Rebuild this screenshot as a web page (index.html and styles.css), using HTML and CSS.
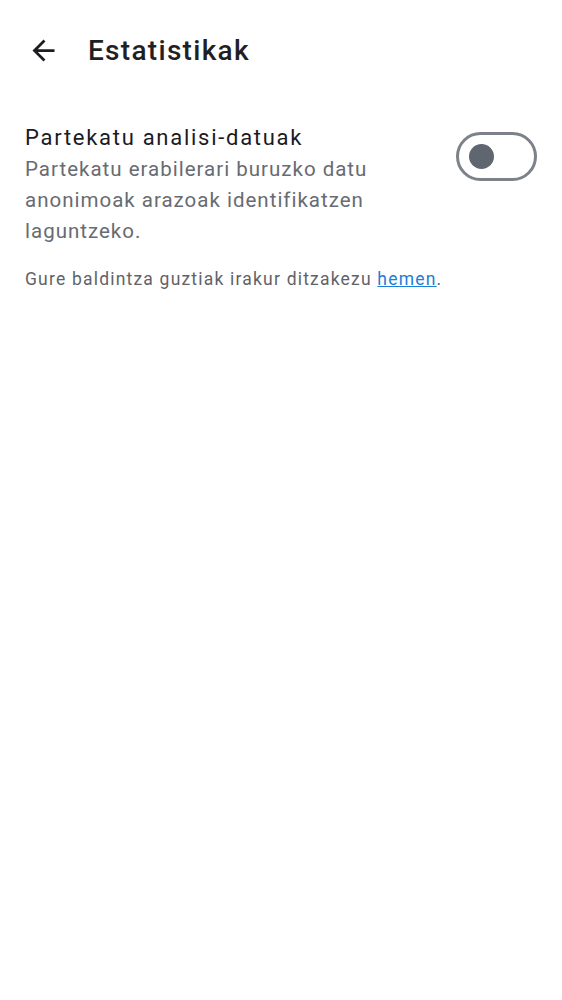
FILE: index.html
```html
<!DOCTYPE html>
<html lang="eu">
<head>
<meta charset="utf-8">
<title>Estatistikak</title>
<link rel="stylesheet" href="styles.css">
</head>
<body>
<header class="topbar">
  <button class="back" aria-label="Atzera">
    <svg width="33" height="33" viewBox="0 0 24 24"><path d="M20 11H7.83l5.59-5.59L12 4l-8 8 8 8 1.41-1.41L7.83 13H20v-2z" fill="#1c1b1f"/></svg>
  </button>
  <h1 class="title">Estatistikak</h1>
</header>
<main class="content">
  <section class="setting">
    <div class="setting-text">
      <div class="setting-title">Partekatu analisi-datuak</div>
      <div class="setting-desc">Partekatu erabilerari buruzko datu anonimoak arazoak identifikatzen laguntzeko.</div>
    </div>
    <div class="switch" role="switch" aria-checked="false"><span class="thumb"></span></div>
  </section>
  <p class="note">Gure baldintza guztiak irakur ditzakezu <a href="#" class="link">hemen</a>.</p>
</main>
</body>
</html>
```
FILE: styles.css
```css
html, body {
  margin: 0;
  padding: 0;
  background: #ffffff;
  font-family: Roboto, "Noto Sans", sans-serif;
}
.topbar {
  height: 100px;
  display: flex;
  align-items: center;
  padding-left: 19px;
  box-sizing: border-box;
}
.back {
  width: 48px;
  height: 48px;
  border: 0;
  background: none;
  padding: 0;
  display: flex;
  align-items: center;
  justify-content: center;
}
.title {
  margin: 0 0 0 21px;
  font-size: 28px;
  font-weight: 500;
  letter-spacing: 1.3px;
  color: #1f1f24;
}
.content {
  padding: 21px 25px 0 25px;
}
.setting {
  display: flex;
  align-items: flex-start;
  justify-content: space-between;
}
.setting-text {
  width: 400px;
}
.setting-title {
  font-size: 22px;
  line-height: 33px;
  letter-spacing: 1.72px;
  color: #1c1b1f;
}
.setting-desc {
  font-size: 20.5px;
  line-height: 31px;
  color: #676b72;
  letter-spacing: 1px;
}
.switch {
  flex: none;
  margin-top: 11px;
  width: 81px;
  height: 49px;
  border: 3px solid #7c818a;
  border-radius: 25px;
  box-sizing: border-box;
  display: flex;
  align-items: center;
  padding-left: 10px;
}
.thumb {
  width: 25px;
  height: 25px;
  border-radius: 50%;
  background: #5f6670;
}
.note {
  margin: 20px 0 0 0;
  font-size: 17.5px;
  line-height: 24px;
  color: #5f6368;
  letter-spacing: 1.2px;
}
.link {
  color: #1a7fd6;
  text-decoration: underline;
}
```
